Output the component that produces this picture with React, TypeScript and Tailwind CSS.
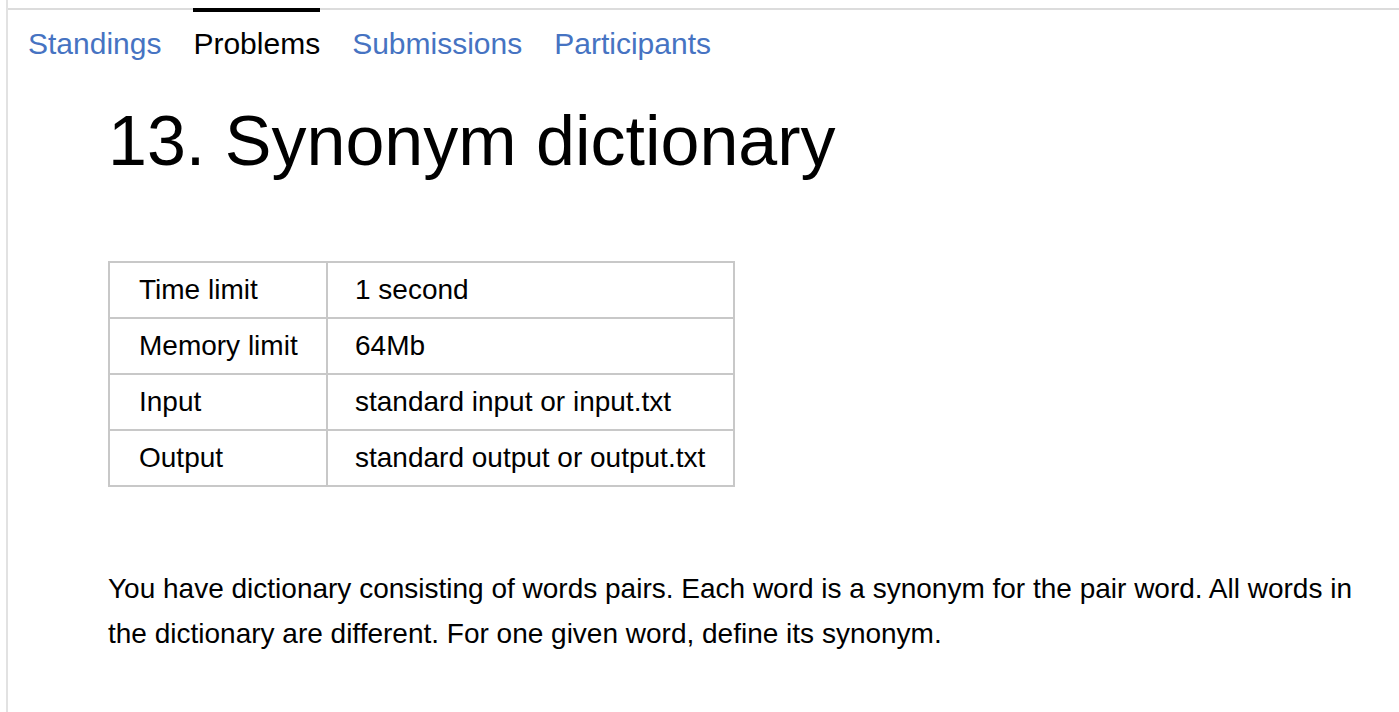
const tabs = [
  { label: "Standings", active: false },
  { label: "Problems", active: true },
  { label: "Submissions", active: false },
  { label: "Participants", active: false },
];

const limits = [
  ["Time limit", "1 second"],
  ["Memory limit", "64Mb"],
  ["Input", "standard input or input.txt"],
  ["Output", "standard output or output.txt"],
];

export default function App() {
  return (
    <div className="min-h-screen bg-white font-['Liberation_Sans',Arial,sans-serif] text-black">
      <div className="ml-[6px] min-h-screen border-l-2 border-[#e2e2e2] pt-[8px]">
        <nav className="flex border-t-2 border-[#dcdcdc] pl-[20px]">
          {tabs.map((t) => (
            <a
              key={t.label}
              href="#"
              className={
                "-mt-[2px] mr-[32px] border-t-4 pt-[15px] text-[30px] leading-[34px] " +
                (t.active ? "border-black text-black" : "border-transparent text-[#4673c2]")
              }
            >
              {t.label}
            </a>
          ))}
        </nav>

        <main className="pl-[100px] pr-[24px]">
          <h1 className="mt-[45px] text-[70px] leading-none font-normal">
            13. Synonym dictionary
          </h1>

          <table className="mt-[85px] w-[627px] table-fixed border-collapse whitespace-nowrap text-[28px]">
            <tbody>
              {limits.map(([k, v]) => (
                <tr key={k}>
                  <td className="h-[56px] w-[218px] border-2 border-[#c8c8c8] pl-[29px] align-middle">
                    {k}
                  </td>
                  <td className="h-[56px] border-2 border-[#c8c8c8] pl-[27px] align-middle">
                    {v}
                  </td>
                </tr>
              ))}
            </tbody>
          </table>

          <p className="mt-[79px] text-[28px] leading-[45px]">
            You have dictionary consisting of words pairs. Each word is a synonym for the pair word. All
            words in the dictionary are different. For one given word, define its synonym.
          </p>
        </main>
      </div>
    </div>
  );
}
